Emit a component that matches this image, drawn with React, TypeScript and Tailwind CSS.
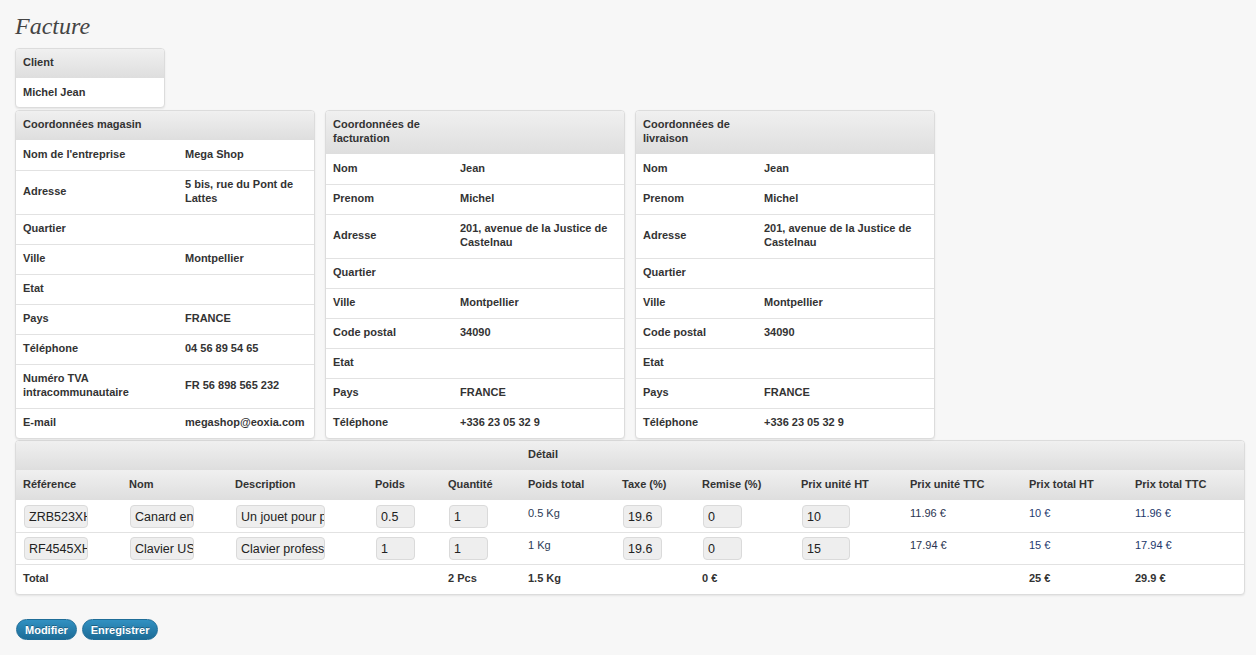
const font = { fontFamily: '"Liberation Sans", Arial, sans-serif' };

type Row = [string, string];

const magasin: Row[] = [
  ["Nom de l'entreprise", "Mega Shop"],
  ["Adresse", "5 bis, rue du Pont de Lattes"],
  ["Quartier", ""],
  ["Ville", "Montpellier"],
  ["Etat", ""],
  ["Pays", "FRANCE"],
  ["Téléphone", "04 56 89 54 65"],
  ["Numéro TVA intracommunautaire", "FR 56 898 565 232"],
  ["E-mail", "megashop@eoxia.com"],
];

const adresse: Row[] = [
  ["Nom", "Jean"],
  ["Prenom", "Michel"],
  ["Adresse", "201, avenue de la Justice de Castelnau"],
  ["Quartier", ""],
  ["Ville", "Montpellier"],
  ["Code postal", "34090"],
  ["Etat", ""],
  ["Pays", "FRANCE"],
  ["Téléphone", "+336 23 05 32 9"],
];

const headBg = "bg-gradient-to-b from-[#f0f0f0] to-[#dedede]";
const panel =
  "overflow-hidden rounded-[4px] border border-[#dcdcdc] bg-white shadow-[0_1px_2px_rgba(0,0,0,0.08)]";

const InfoPanel = ({ title, rows, col }: { title: string; rows: Row[]; col: string }) => (
  <div className={`w-[300px] ${panel}`}>
    <div className={`grid ${col} ${headBg}`}>
      <div className="px-[7px] pt-[6px] pb-[9px] font-bold">{title}</div>
    </div>
    {rows.map(([k, v], i) => (
      <div key={i} className={`grid ${col} ${i > 0 ? "border-t border-[#e2e2e2]" : ""}`}>
        <div className={`flex items-center px-[7px] ${i > 0 ? "pt-[6px]" : "pt-[7px]"} pb-[9px] font-bold`}>{k}</div>
        <div className={`flex items-center px-[7px] ${i > 0 ? "pt-[6px]" : "pt-[7px]"} pb-[9px] font-bold`}>{v}</div>
      </div>
    ))}
  </div>
);

const cols =
  "grid-cols-[106px_106px_140px_73px_80px_94px_80px_99px_109px_119px_106px_1fr]";

const Input = ({ value, w }: { value: string; w: string }) => (
  <input
    readOnly
    value={value}
    className={`${w} block h-[23px] rounded-[4px] border border-[#dadada] bg-[#eeeeee] pl-[4px] text-[12.5px] leading-[21px] text-[#222] outline-none`}
    style={font}
  />
);

type Line = {
  ref: string;
  nom: string;
  desc: string;
  poids: string;
  qte: string;
  ptot: string;
  taxe: string;
  remise: string;
  puht: string;
  puttc: string;
  ptht: string;
  ptttc: string;
};

const lines: Line[] = [
  {
    ref: "ZRB523XH",
    nom: "Canard en plastique",
    desc: "Un jouet pour petits",
    poids: "0.5",
    qte: "1",
    ptot: "0.5 Kg",
    taxe: "19.6",
    remise: "0",
    puht: "10",
    puttc: "11.96 €",
    ptht: "10 €",
    ptttc: "11.96 €",
  },
  {
    ref: "RF4545XH",
    nom: "Clavier USB",
    desc: "Clavier professionnel",
    poids: "1",
    qte: "1",
    ptot: "1 Kg",
    taxe: "19.6",
    remise: "0",
    puht: "15",
    puttc: "17.94 €",
    ptht: "15 €",
    ptttc: "17.94 €",
  },
];

const heads = [
  "Référence",
  "Nom",
  "Description",
  "Poids",
  "Quantité",
  "Poids total",
  "Taxe (%)",
  "Remise (%)",
  "Prix unité HT",
  "Prix unité TTC",
  "Prix total HT",
  "Prix total TTC",
];

const App = () => {
  return (
    <div
      className="min-h-[655px] bg-[#f7f7f7] px-[15px] text-[11px] leading-[14px] text-[#333]"
      style={font}
    >
      <h1
        className="pt-[12px] pb-[8px] text-[24px] leading-[28px] italic text-[#444]"
        style={{ fontFamily: '"Liberation Serif", "Times New Roman", serif' }}
      >
        Facture
      </h1>

      <div className={`w-[150px] ${panel}`}>
        <div className={`px-[7px] pt-[6px] pb-[9px] font-bold ${headBg}`}>Client</div>
        <div className="px-[7px] pt-[7px] pb-[8px] font-bold">Michel Jean</div>
      </div>

      <div className="mt-[2px] flex items-start gap-[10px]">
        <InfoPanel title="Coordonnées magasin" rows={magasin} col="grid-cols-[162px_1fr]" />
        <InfoPanel title="Coordonnées de facturation" rows={adresse} col="grid-cols-[127px_1fr]" />
        <InfoPanel title="Coordonnées de livraison" rows={adresse} col="grid-cols-[121px_1fr]" />
      </div>

      <div className={`mt-[1px] w-[1230px] ${panel}`}>
        <div className={`grid ${cols} ${headBg}`}>
          <div className="col-start-6 px-[7px] pt-[6px] pb-[9px] font-bold">Détail</div>
        </div>
        <div className={`grid ${cols} ${headBg}`}>
          {heads.map((h) => (
            <div key={h} className="px-[7px] pt-[7px] pb-[9px] font-bold">
              {h}
            </div>
          ))}
        </div>
        {lines.map((l, i) => {
          const ip = i > 0 ? "pt-[4px]" : "pt-[5px]";
          const tp = i > 0 ? "pt-[5px]" : "pt-[6px]";
          return (
            <div key={i} className={`grid h-[32px] ${cols} ${i > 0 ? "border-t border-[#e2e2e2]" : ""}`}>
              <div className={`px-[8px] ${ip}`}>
                <Input value={l.ref} w="w-[64px]" />
              </div>
              <div className={`px-[8px] ${ip}`}>
                <Input value={l.nom} w="w-[64px]" />
              </div>
              <div className={`px-[8px] ${ip}`}>
                <Input value={l.desc} w="w-[89px]" />
              </div>
              <div className={`px-[8px] ${ip}`}>
                <Input value={l.poids} w="w-[39px]" />
              </div>
              <div className={`px-[8px] ${ip}`}>
                <Input value={l.qte} w="w-[39px]" />
              </div>
              <div className={`px-[7px] ${tp} text-[#2c3a55]`}>{l.ptot}</div>
              <div className={`px-[8px] ${ip}`}>
                <Input value={l.taxe} w="w-[39px]" />
              </div>
              <div className={`px-[8px] ${ip}`}>
                <Input value={l.remise} w="w-[39px]" />
              </div>
              <div className={`px-[8px] ${ip}`}>
                <Input value={l.puht} w="w-[48px]" />
              </div>
              <div className={`px-[7px] ${tp} text-[#2a3450]`}>{l.puttc}</div>
              <div className={`px-[7px] ${tp} text-[#1f3a70]`}>{l.ptht}</div>
              <div className={`px-[7px] ${tp} text-[#22386a]`}>{l.ptttc}</div>
            </div>
          );
        })}
        <div className={`grid ${cols} border-t border-[#e2e2e2] font-bold`}>
          <div className="px-[7px] pt-[6px] pb-[9px]">Total</div>
          <div />
          <div />
          <div />
          <div className="px-[7px] pt-[6px] pb-[9px]">2 Pcs</div>
          <div className="px-[7px] pt-[6px] pb-[9px]">1.5 Kg</div>
          <div />
          <div className="px-[7px] pt-[6px] pb-[9px]">0 €</div>
          <div />
          <div />
          <div className="px-[7px] pt-[6px] pb-[9px]">25 €</div>
          <div className="px-[7px] pt-[6px] pb-[9px]">29.9 €</div>
        </div>
      </div>

      <div className="mt-[24px] flex gap-[5px] pl-[1px]">
        {["Modifier", "Enregistrer"].map((b) => (
          <button
            key={b}
            className="h-[21px] rounded-full border border-[#1f6d98] bg-gradient-to-b from-[#3191c2] to-[#1d6c97] px-[8px] text-[11px] font-bold text-white [text-shadow:0_-1px_0_rgba(0,0,0,0.3)]"
          >
            {b}
          </button>
        ))}
      </div>
    </div>
  );
};

export default App;
